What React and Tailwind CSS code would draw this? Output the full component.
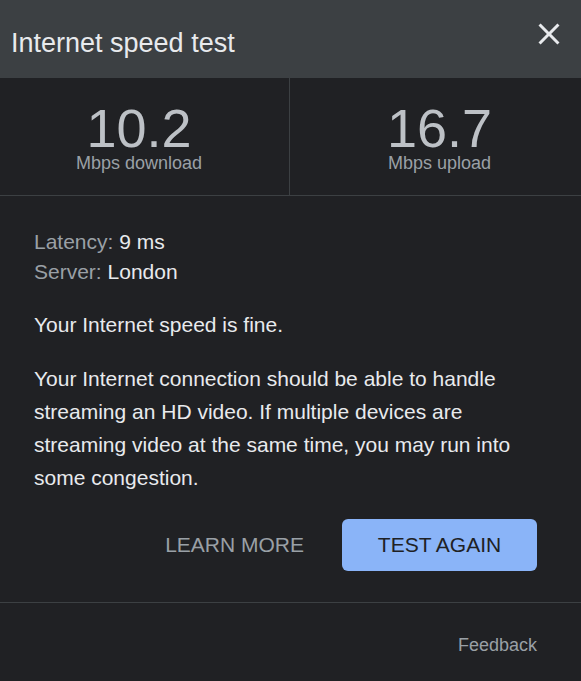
import React from "react"

function CloseIcon() {
  return (
    <svg width="36" height="36" viewBox="0 0 24 24" fill="#e8eaed">
      <path d="M19 6.41L17.59 5 12 10.59 6.41 5 5 6.41 10.59 12 5 17.59 6.41 19 12 13.41 17.59 19 19 17.59 13.41 12z" />
    </svg>
  )
}

function Stat({ value, label, className }) {
  return (
    <div className={`flex flex-col items-center pt-[25px] ${className}`}>
      <div className="text-[54px] leading-[50px] text-[#bdc1c6]">{value}</div>
      <div className="text-[18px] leading-[20px] text-[#9aa0a6]">{label}</div>
    </div>
  )
}

export default function App() {
  return (
    <div className="w-[581px] h-[681px] bg-[#202124] overflow-hidden font-['Liberation_Sans',Arial,sans-serif]">
      <div className="flex justify-between items-start h-[78px] bg-[#3c4043] pl-[11px] pr-[14px]">
        <h1 className="mt-[25px] text-[27px] leading-[36px] text-[#e8eaed]">Internet speed test</h1>
        <button className="mt-[16px]">
          <CloseIcon />
        </button>
      </div>

      <div className="flex h-[118px] border-b border-[#3c4043]">
        <Stat value="10.2" label="Mbps download" className="w-[290px] pr-[11px] border-r border-[#3c4043]" />
        <Stat value="16.7" label="Mbps upload" className="flex-1 pl-[8px]" />
      </div>

      <div className="pl-[34px] pr-[44px] pt-[31px] pb-[31px] border-b border-[#3c4043]">
        <div className="text-[21px] leading-[30px]">
          <div>
            <span className="text-[#9aa0a6]">Latency: </span>
            <span className="text-[#e8eaed]">9 ms</span>
          </div>
          <div>
            <span className="text-[#9aa0a6]">Server: </span>
            <span className="text-[#e8eaed]">London</span>
          </div>
        </div>
        <p className="mt-[21px] text-[21px] leading-[33px] text-[#e8eaed]">Your Internet speed is fine.</p>
        <p className="mt-[21px] text-[21px] leading-[33px] text-[#e8eaed]">
          Your Internet connection should be able to handle streaming an HD video. If multiple devices are
          streaming video at the same time, you may run into some congestion.
        </p>
        <div className="mt-[25px] flex items-center justify-end gap-[38px]">
          <span className="text-[21px] text-[#9aa0a6]">LEARN MORE</span>
          <button className="w-[195px] h-[52px] rounded-[6px] bg-[#8ab4f8] text-[21px] text-[#202124]">
            TEST AGAIN
          </button>
        </div>
      </div>

      <div className="flex justify-end pr-[44px] pt-[33px]">
        <span className="text-[18px] leading-[18px] text-[#9aa0a6]">Feedback</span>
      </div>
    </div>
  )
}
